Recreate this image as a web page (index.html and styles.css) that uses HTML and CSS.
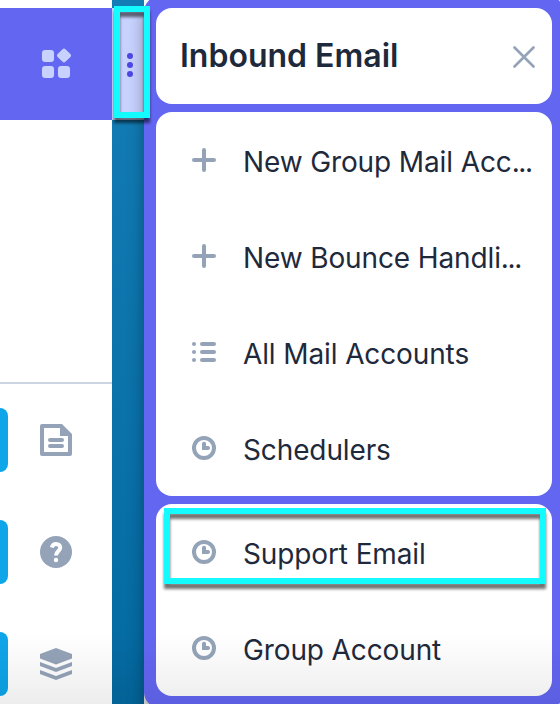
FILE: index.html
```html
<!DOCTYPE html>
<html lang="en">
<head>
  <meta charset="UTF-8">
  <meta name="viewport" content="width=device-width, initial-scale=1.0">
  <title>Inbound Email</title>
  <link rel="stylesheet" href="styles.css">
</head>
<body>
  <svg width="0" height="0" class="symbols">
    <symbol id="icon-plus" viewBox="0 0 24 24">
      <path d="M12 2v20M2 12h20" fill="none" stroke="currentColor" stroke-width="4" stroke-linecap="round"/>
    </symbol>
    <symbol id="icon-list" viewBox="0 0 24 24">
      <path d="M10 4h12M10 12h12M10 20h12" fill="none" stroke="currentColor" stroke-width="4" stroke-linecap="round"/>
      <circle cx="2" cy="4" r="2"/>
      <circle cx="2" cy="12" r="2"/>
      <circle cx="2" cy="20" r="2"/>
    </symbol>
    <symbol id="icon-clock" viewBox="0 0 24 24">
      <circle cx="12" cy="12" r="10" fill="none" stroke="currentColor" stroke-width="4"/>
      <path d="M10 7.8a2 2 0 0 1 4 0V10h2a2 2 0 0 1 0 4h-6z"/>
    </symbol>
  </svg>

  <div class="app-layout">
    <aside class="sidebar">
      <a href="#apps" class="sidebar-item active">
        <svg class="sidebar-icon" viewBox="0 0 32 32">
          <rect x="2" y="2" width="12" height="12" rx="3"/>
          <rect x="2" y="18" width="12" height="12" rx="3"/>
          <rect x="18" y="18" width="12" height="12" rx="3"/>
          <rect x="18.5" y="2" width="11" height="11" rx="2" transform="rotate(45 24 7.5)"/>
        </svg>
      </a>
      <nav class="sidebar-bottom">
        <a href="#documents" class="sidebar-item marked">
          <svg class="sidebar-icon" viewBox="0 0 32 32">
            <path fill-rule="evenodd" d="M2 0h20l10 10v20a2 2 0 0 1-2 2H2a2 2 0 0 1-2-2V2a2 2 0 0 1 2-2zM4 4v24h24V12h-8V4z"/>
            <path d="M10 16h12M10 22h12" fill="none" stroke="currentColor" stroke-width="4" stroke-linecap="round"/>
          </svg>
        </a>
        <a href="#help" class="sidebar-item marked">
          <svg class="sidebar-icon" viewBox="0 0 32 32">
            <circle cx="16" cy="16" r="16"/>
            <path d="M11.800 11.600C12.400 9.200 14 8 16 8c2.600 0 4.200 1.600 4.200 3.700 0 3.700-4.200 3.600-4.200 7.800" fill="none" stroke="#fff" stroke-width="4"/>
            <circle cx="16" cy="24" r="2.200" fill="#fff"/>
          </svg>
        </a>
        <a href="#layers" class="sidebar-item marked">
          <svg class="sidebar-icon" viewBox="0 0 32 32">
            <path d="M16 0l16 6v4.500l-16 6-16-6V6z"/>
            <path d="M0 14l16 6 16-6v4l-16 6-16-6z"/>
            <path d="M0 22l16 6 16-6v4l-16 6-16-6z"/>
          </svg>
        </a>
      </nav>
    </aside>

    <div class="gutter">
      <button class="more-btn">
        <span class="dot"></span>
        <span class="dot"></span>
        <span class="dot"></span>
      </button>
    </div>

    <main class="panel">
      <header class="card panel-header">
        <h1>Inbound Email</h1>
        <svg class="close-icon" viewBox="0 0 22 22">
          <path d="M1.500 1.500l19 19M20.500 1.500l-19 19" fill="none" stroke="currentColor" stroke-width="2.600" stroke-linecap="round"/>
        </svg>
      </header>
      <ul class="card menu">
        <li><svg class="menu-icon"><use href="#icon-plus"/></svg><span>New Group Mail Acc<i>...</i></span></li>
        <li><svg class="menu-icon"><use href="#icon-plus"/></svg><span>New Bounce Handli<i>...</i></span></li>
        <li><svg class="menu-icon"><use href="#icon-list"/></svg><span>All Mail Accounts</span></li>
        <li><svg class="menu-icon"><use href="#icon-clock"/></svg><span>Schedulers</span></li>
      </ul>
      <ul class="card menu">
        <li><svg class="menu-icon"><use href="#icon-clock"/></svg><span>Support Email</span></li>
        <li><svg class="menu-icon"><use href="#icon-clock"/></svg><span>Group Account</span></li>
      </ul>
    </main>

    <div class="fade"></div>
    <div class="highlight highlight-more"></div>
    <div class="highlight highlight-support"></div>
  </div>
</body>
</html>
```
FILE: styles.css
```css
* { margin: 0; padding: 0; box-sizing: border-box; }

body {
  font-family: Inter, "Liberation Sans", sans-serif;
  color: #1e293b;
  overflow: hidden;
}

.symbols {
  position: absolute;
}

svg {
  display: block;
  fill: currentColor;
}

.app-layout {
  position: relative;
  display: grid;
  grid-template-columns: 112px 32px 420px;
  height: 704px;
  overflow: hidden;
}

/* Sidebar */
.sidebar {
  display: flex;
  flex-direction: column;
  height: 720px;
  padding-top: 8px;
  background: white;
}

.sidebar-item {
  display: flex;
  align-items: center;
  justify-content: center;
  position: relative;
  height: 112px;
  color: #94a3b8;
}

.sidebar-item.active {
  background: #6366f1;
  color: #c7d2fe;
}

.sidebar-item.marked::before {
  content: "";
  position: absolute;
  left: 0;
  top: 24px;
  width: 8px;
  height: 64px;
  border-radius: 0 8px 8px 0;
  background: #0ea5e9;
}

.sidebar-bottom {
  margin-top: auto;
  border-top: 2px solid #cbd5e1;
}

.sidebar-icon {
  width: 32px;
  height: 32px;
}

/* Gutter with the "more" button */
.gutter {
  height: 720px;
  padding-top: 8px;
  background: linear-gradient(#157db5, #0369a1);
}

.more-btn {
  display: flex;
  flex-direction: column;
  align-items: center;
  justify-content: center;
  gap: 3px;
  width: 32px;
  height: 112px;
  padding: 2px 0 0 4px;
  border: none;
  background: #c7d2fe;
}

.dot {
  width: 6px;
  height: 6px;
  border-radius: 50%;
  background: #4f46e5;
}

/* Panel */
.panel {
  display: flex;
  flex-direction: column;
  gap: 8px;
  position: relative;
  height: 712px;
  margin-top: -4px;
  padding: 12px;
  border-radius: 16px;
  background: #6366f1;
  box-shadow: 0 10px 16px rgba(0, 0, 0, 0.35);
}

.card {
  border-radius: 16px;
  background: white;
}

.panel-header {
  display: flex;
  align-items: center;
  justify-content: space-between;
  height: 96px;
  padding: 0 17px 0 24px;
}

.panel-header h1 {
  font-size: 32px;
  font-weight: 600;
  line-height: 40px;
}

.close-icon {
  width: 22px;
  height: 22px;
  margin-top: 2px;
  color: #94a3b8;
}

.menu {
  list-style: none;
}

.menu li {
  display: flex;
  align-items: center;
  gap: 27px;
  height: 96px;
  padding-left: 36px;
  font-size: 28px;
  line-height: 40px;
  letter-spacing: -0.12px;
  white-space: nowrap;
}

.menu span {
  padding-top: 4px;
}

.menu i {
  font-style: normal;
  letter-spacing: -1.4px;
}

.menu-icon {
  width: 24px;
  height: 24px;
  color: #94a3b8;
}

/* Overlays */
.fade {
  position: absolute;
  left: 0;
  right: 0;
  bottom: 0;
  height: 70px;
  background: linear-gradient(rgba(0, 0, 0, 0), rgba(0, 0, 0, 0.07));
}

.highlight {
  position: absolute;
  border: 6px solid #14fbff;
  filter: drop-shadow(0 5px 1.5px rgba(0, 0, 0, 0.55));
}

.highlight-more {
  left: 114px;
  top: 6px;
  width: 36px;
  height: 112px;
}

.highlight-support {
  left: 164px;
  top: 508px;
  width: 382px;
  height: 76px;
}
```
